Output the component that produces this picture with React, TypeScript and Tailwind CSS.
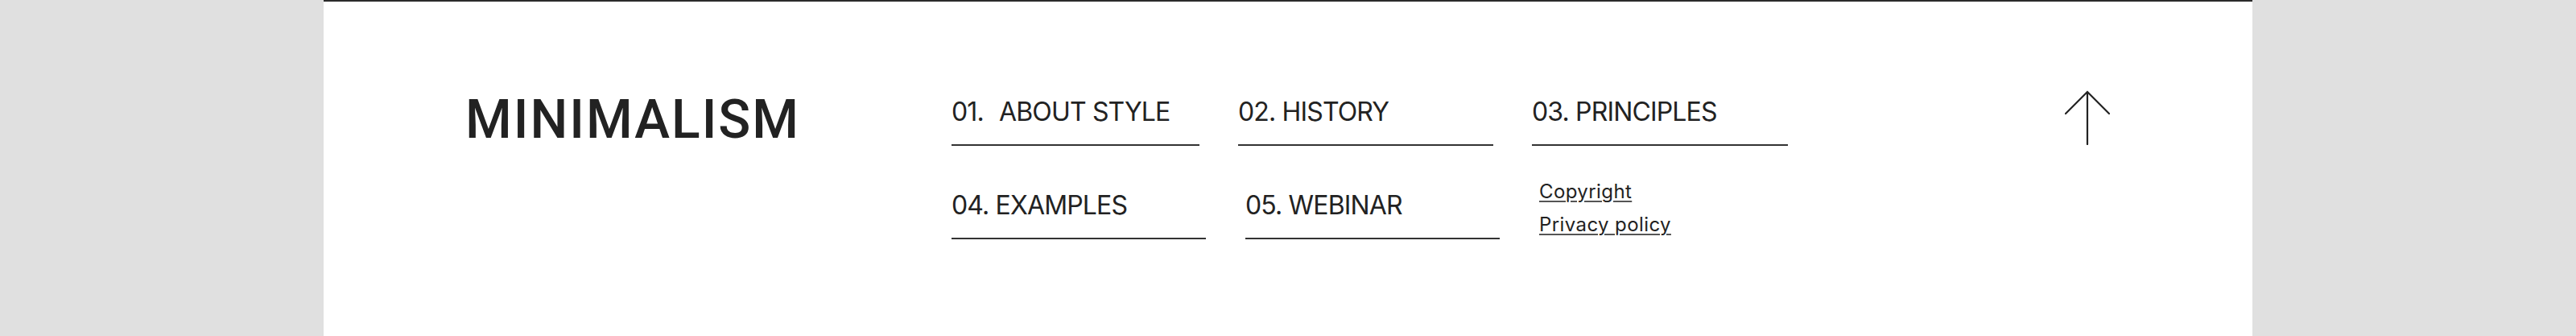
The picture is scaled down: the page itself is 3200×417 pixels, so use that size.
import React from "react";

type NavItem = { num: string; label: string; width: string; wide?: boolean };

const rowOne: NavItem[] = [
  { num: "01.", label: "ABOUT STYLE", width: "w-[308px]", wide: true },
  { num: "02.", label: "HISTORY", width: "w-[317px]" },
  { num: "03.", label: "PRINCIPLES", width: "w-[318px]" },
];

const rowTwo: NavItem[] = [
  { num: "04.", label: "EXAMPLES", width: "w-[316px]" },
  { num: "05.", label: "WEBINAR", width: "w-[316px]" },
];

function NavLink({ item }: { item: NavItem }) {
  return (
    <a href="#" className={`${item.width} block shrink-0`}>
      <span className="block text-[32px] leading-none text-[#222] tracking-[-0.85px] whitespace-nowrap">
        {item.num}{" "}
        {item.wide && <span className="inline-block w-[11px]" />}
        {item.label}
      </span>
      <span className="block mt-[24px] h-[2px] bg-[#333]" />
    </a>
  );
}

function ArrowUp() {
  return (
    <svg width="56" height="68" viewBox="0 0 56 68" fill="none">
      <path
        d="M1 29 L28 2 L55 29 M28 2 L28 67"
        stroke="#222"
        strokeWidth="2.2"
        strokeLinecap="round"
        strokeLinejoin="miter"
      />
    </svg>
  );
}

export default function App() {
  return (
    <div
      className="w-[3200px] h-[417px] bg-[#e0e0e0] flex justify-center"
      style={{ fontFamily: "Inter, 'Noto Sans', sans-serif" }}
    >
      <footer className="w-[2396px] h-full bg-white border-t-2 border-[#2b2b2b] flex items-start pl-[176px] pr-[177px] pt-[100px]">
        {/* Logo */}
        <div className="w-[604px] shrink-0 mt-[14px]">
          <h1 className="text-[66px] leading-none font-medium tracking-[2px] text-[#222] font-['Roboto',sans-serif]">
            MINIMALISM
          </h1>
        </div>

        {/* Navigation */}
        <nav className="mt-[21px]">
          <div className="flex gap-[48px]">
            {rowOne.map((item) => (
              <NavLink key={item.label} item={item} />
            ))}
          </div>
          <div className="flex gap-[49px] mt-[36px]">
            {rowTwo.map((item) => (
              <div key={item.label} className="pt-[22px]">
                <NavLink item={item} />
              </div>
            ))}
            <div className="flex flex-col text-[24px] leading-[41px] tracking-[0.4px] text-[#222]">
              <a href="#" className="underline underline-offset-[3px] decoration-[1.5px] decoration-[#555]">
                Copyright
              </a>
              <a href="#" className="underline underline-offset-[3px] decoration-[1.5px] decoration-[#555]">
                Privacy policy
              </a>
            </div>
          </div>
        </nav>

        {/* Back to top */}
        <a href="#" className="ml-auto mt-[10px] block">
          <ArrowUp />
        </a>
      </footer>
    </div>
  );
}
